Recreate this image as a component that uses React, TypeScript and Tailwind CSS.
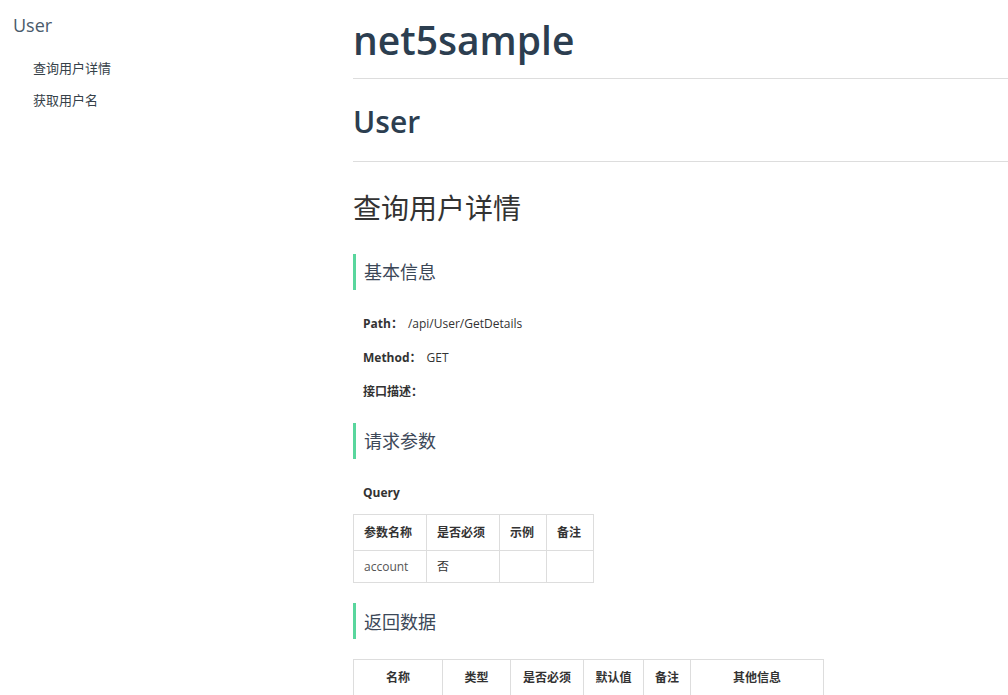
import React from 'react';

const font = '"Open Sans", "Noto Sans CJK SC", sans-serif';

const SectionTitle = ({ children, className = '' }: { children: React.ReactNode; className?: string }) => (
  <div className={`border-l-[3px] border-[#59d69d] pl-[8px] h-[36px] leading-[36px] text-[18px] text-[#3c4858] ${className}`}>
    {children}
  </div>
);

const InfoRow = ({ label, value, className = '' }: { label: string; value?: string; className?: string }) => (
  <div className={`pl-[10px] h-[20px] leading-[21px] text-[12px] text-[#333] ${className}`}>
    <span className="font-bold">{label}：</span>
    {value && <span className="ml-[5px]">{value}</span>}
  </div>
);

export default function App() {
  const returnCols = [
    { name: '名称', w: 89 },
    { name: '类型', w: 68 },
    { name: '是否必须', w: 73 },
    { name: '默认值', w: 60 },
    { name: '备注', w: 47 },
    { name: '其他信息', w: 133 },
  ];

  return (
    <div className="flex w-[1008px] h-[695px] overflow-hidden bg-white" style={{ fontFamily: font }}>
      {/* Sidebar */}
      <aside className="w-[353px] shrink-0 pl-[13px] pt-[12px]">
        <div className="text-[18px] leading-[26px] text-[#4a5a6b]">User</div>
        <ul className="mt-[20px] pl-[20px] text-[13px] text-[#364149]">
          <li className="h-[20px] leading-[20px]">查询用户详情</li>
          <li className="mt-[12px] h-[20px] leading-[20px]">获取用户名</li>
        </ul>
      </aside>

      {/* Main content */}
      <main className="flex-1 min-w-0">
        <h1 className="mt-[16px] pb-[14px] border-b border-[#ddd] text-[39px] leading-[48px] font-semibold text-[#2c3e50]">
          net5sample
        </h1>
        <h2 className="mt-[25px] pb-[21px] border-b border-[#ddd] text-[30px] leading-[36px] font-semibold text-[#2c3e50]">
          User
        </h2>
        <h3 className="mt-[29px] text-[28px] leading-[34px] text-[#333]">查询用户详情</h3>

        <SectionTitle className="mt-[29px]">基本信息</SectionTitle>
        <InfoRow className="mt-[23px]" label="Path" value="/api/User/GetDetails" />
        <InfoRow className="mt-[14px]" label="Method" value="GET" />
        <InfoRow className="mt-[14px]" label="接口描述" />

        <SectionTitle className="mt-[22px]">请求参数</SectionTitle>
        <div className="mt-[23px] pl-[10px] h-[20px] leading-[21px] text-[12px] font-bold text-[#333]">Query</div>

        <table className="mt-[12px] border-collapse table-fixed text-[12px] text-[#333]">
          <colgroup>
            <col className="w-[73px]" />
            <col className="w-[73px]" />
            <col className="w-[47px]" />
            <col className="w-[47px]" />
          </colgroup>
          <thead>
            <tr className="h-[36px]">
              {['参数名称', '是否必须', '示例', '备注'].map((h) => (
                <th key={h} className="border border-[#ddd] px-[10px] pt-[1px] text-left font-bold whitespace-nowrap">
                  {h}
                </th>
              ))}
            </tr>
          </thead>
          <tbody>
            <tr className="h-[32px]">
              <td className="border border-[#ddd] px-[10px] pt-[1px] text-[#555]">account</td>
              <td className="border border-[#ddd] px-[10px] pt-[1px]">否</td>
              <td className="border border-[#ddd]"></td>
              <td className="border border-[#ddd]"></td>
            </tr>
          </tbody>
        </table>

        <SectionTitle className="mt-[20px] leading-[38px]">返回数据</SectionTitle>

        <table className="mt-[20px] border-collapse table-fixed text-[12px] text-[#333]">
          <colgroup>
            {returnCols.map((c) => (
              <col key={c.name} style={{ width: c.w }} />
            ))}
          </colgroup>
          <thead>
            <tr className="h-[37px]">
              {returnCols.map((c) => (
                <th key={c.name} className="border border-[#ddd] px-[8px] text-center font-bold whitespace-nowrap">
                  {c.name}
                </th>
              ))}
            </tr>
          </thead>
        </table>
      </main>
    </div>
  );
}
